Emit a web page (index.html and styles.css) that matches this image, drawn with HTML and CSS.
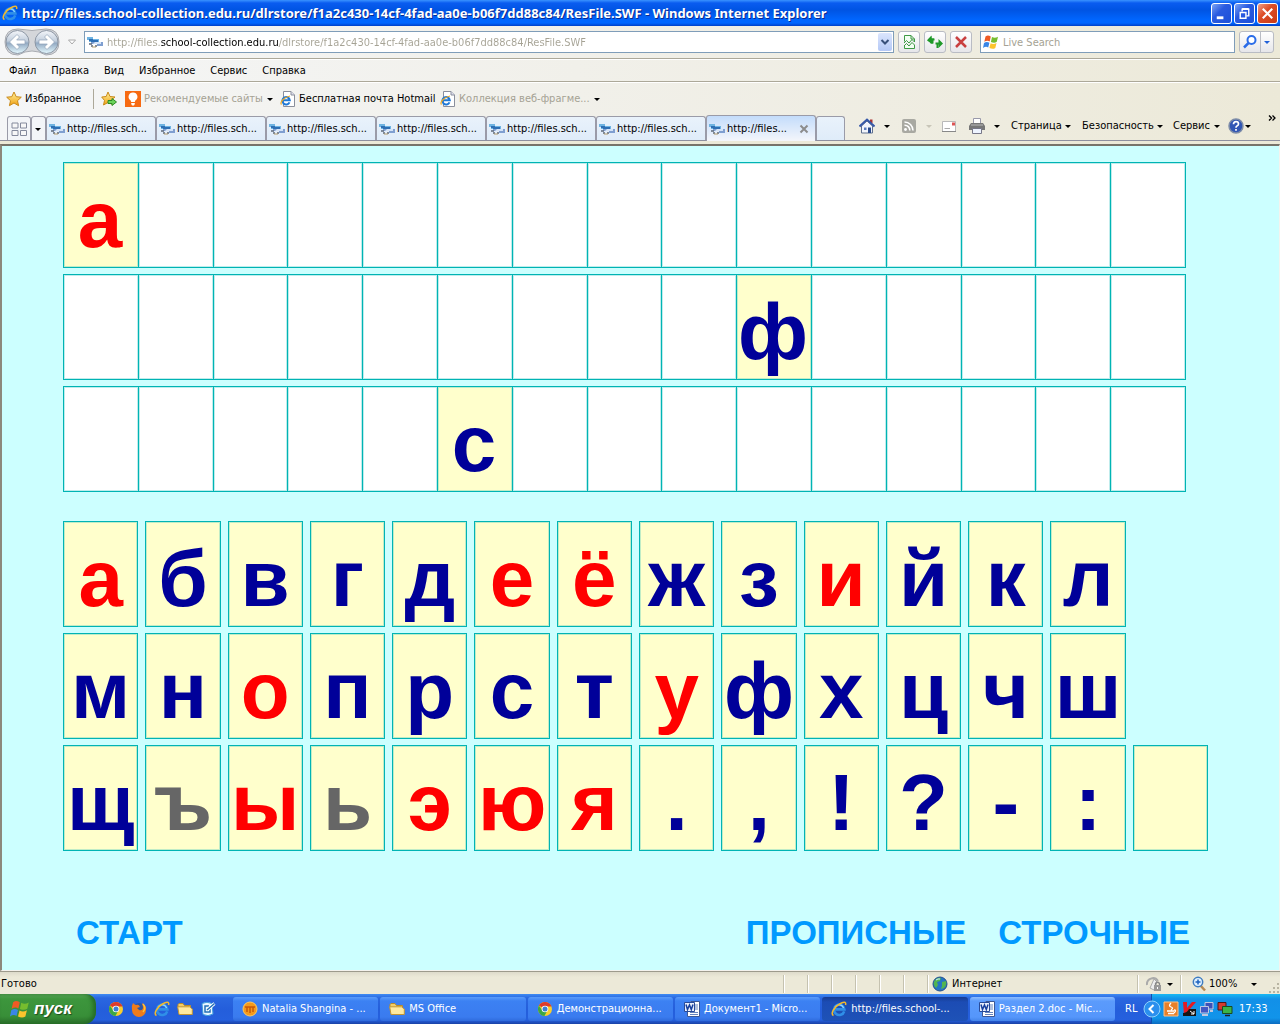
FILE: index.html
```html
<!DOCTYPE html>
<html lang="ru">
<head>
<meta charset="utf-8">
<meta name="viewport" content="width=device-width, initial-scale=1">
<title>ResFile.SWF - Windows Internet Explorer</title>
<link rel="stylesheet" href="styles.css">
</head>
<body>
<svg class="sprite" aria-hidden="true">
  <defs>
    <linearGradient id="gold" x1="0" y1="0" x2="0" y2="1"><stop offset="0" stop-color="#fff3a0"/><stop offset="1" stop-color="#f0a010"/></linearGradient>
    <linearGradient id="orb" x1="0" y1="0" x2="0" y2="1"><stop offset="0" stop-color="#f4f6fa"/><stop offset=".45" stop-color="#c3cfdd"/><stop offset=".55" stop-color="#92a9c2"/><stop offset="1" stop-color="#e6faff"/></linearGradient>
  </defs>
  <symbol id="ie" viewBox="0 0 16 16">
    <path d="M13.2 10.3A5.2 5.2 0 1 1 13.4 8.4H4.5" fill="none" stroke="#2f8fe8" stroke-width="2.6"/>
    <path d="M12.6 7A4.8 4.8 0 0 0 4 6" fill="none" stroke="#8fd4ff" stroke-width="1.2"/>
    <path d="M2.5 14.5C-1 13 3 6 8.500 3C12 .8 15.800 .3 14.500 4" fill="none" stroke="#f3b92c" stroke-width="1.500"/>
  </symbol>
  <symbol id="page-ie" viewBox="0 0 16 16">
    <path d="M3.500 .5H11L14.500 4V15.500H3.500Z" fill="#fff" stroke="#8a8f9c"/><path d="M11 .5V4H14.500" fill="#dde" stroke="#8a8f9c"/>
    <path d="M9.500 11.300A3.700 3.700 0 1 1 9.800 9.300H3.500" fill="none" stroke="#1d78d8" stroke-width="2"/>
    <path d="M1.500 13.500C-.5 12 3 6.500 10 5" fill="none" stroke="#f0a820" stroke-width="1.200"/>
  </symbol>
  <symbol id="cloud" viewBox="0 0 16 16">
    <path d="M0 3H6V5H12V8H2V6H0Z" fill="#6fb4e2"/><path d="M2 5H6V6H11V8H4V7H2Z" fill="#2f6fb4"/>
    <path d="M4 8H16V12H10V10H4Z" fill="#7f9fd0"/><path d="M8 8H14V10H6Z" fill="#d5e4f8"/>
    <path d="M2 10H5M4 12H6M8 12H10" stroke="#5d6a7a" stroke-width="1.500"/><path d="M5 13H9" stroke="#b39c6c"/>
  </symbol>
  <symbol id="star" viewBox="0 0 16 16"><path d="M8 1L10.200 5.700L15.300 6.200L11.500 9.700L12.600 14.700L8 12L3.400 14.700L4.500 9.700L.7 6.200L5.800 5.700Z" fill="url(#gold)" stroke="#c98a1b"/></symbol>
  <symbol id="star-add" viewBox="0 0 16 16"><path d="M7 1L9 5.500L14 6L10.500 9L11.500 13.500L7 11.500L2.500 14L3.500 9.500L.7 6L5.200 5.500Z" fill="url(#gold)" stroke="#c98a1b"/><path d="M7 9.500H11V7.500L15.500 11L11 14.500V12.500H7Z" fill="#6bd35a" stroke="#2d8a25"/></symbol>
  <symbol id="bulb" viewBox="0 0 16 16"><path d="M0 0H16V16H0Z" fill="#f76a12"/><path d="M8 1.500A4.300 4.300 0 0 1 10.300 9.500L9.800 11H6.200L5.700 9.500A4.300 4.300 0 0 1 8 1.500ZM6.200 12H9.800V13L9 14.500H7L6.200 13Z" fill="#fff"/></symbol>
  <symbol id="down" viewBox="0 0 8 8"><path d="M1 3H7L4 6Z" fill="currentColor"/></symbol>
  <symbol id="chevron" viewBox="0 0 10 10"><path d="M1.500 3L5 6.500L8.500 3" fill="none" stroke="#38507a" stroke-width="2"/></symbol>
  <symbol id="flag" viewBox="0 0 16 16">
    <path d="M2.500 2.500C4.500 1 6 1.500 7.800 2.500L6.700 7.500C5 6.500 3.500 6.500 1.300 7.700Z" fill="#ee5a24"/><path d="M9 3C11 4 12.800 4 15 2.700L13.800 7.800C12 9 10 8.800 7.900 7.900Z" fill="#76bd2e"/>
    <path d="M1 9C3 7.700 4.500 7.800 6.400 8.800L5.200 13.500C3.500 12.500 2 12.700 0 13.900Z" fill="#3a86e6"/><path d="M7.600 9.200C9.500 10.200 11.300 10.300 13.500 9L12.300 14C10.500 15.200 8.500 15 6.400 14Z" fill="#fcc42d"/>
  </symbol>
  <symbol id="word" viewBox="0 0 16 16"><path d="M6.500 .5H15.500V15.500H3.500V10" fill="#fff" stroke="#3c5795"/><path d="M11 4H14M11 6H14M11 8H14M6 11.500H14M6 13.500H14" stroke="#6684be"/><path d="M.5 1.500H10.500V10.500H.5Z" fill="#e9effb" stroke="#284b9a"/><path d="M2 3.500L3.500 8.500L5.500 4L7.300 8.500L9 3.500" fill="none" stroke="#173f9d" stroke-width="1.500"/></symbol>
  <symbol id="folder" viewBox="0 0 16 16"><path d="M1 3.500L2 2.500H6L7.500 4.500H13.500V7H1Z" fill="#f3cd67" stroke="#b98a2a"/><path d="M.7 5.800H12.500L15.300 8V13.500H2Z" fill="#ffe9a0" stroke="#c39634"/></symbol>
  <symbol id="chrome" viewBox="0 0 16 16"><circle cx="8" cy="8" r="7" fill="#f9cf2d"/><path d="M8 8L1.900 4.500A7 7 0 0 1 14.100 4.500L14.500 5.500H8Z" fill="#dc3b2c"/><path d="M1.900 4.500A7 7 0 0 0 7.500 15L10 10L8 8L5 9Z" fill="#3da746"/><circle cx="8" cy="8" r="3.300" fill="#fff"/><circle cx="8" cy="8" r="2.500" fill="#3b7fd4"/></symbol>
</svg>

<header class="titlebar">
  <svg class="icon"><use href="#ie"/></svg>
  <h1 class="title">http://files.school-collection.edu.ru/dlrstore/f1a2c430-14cf-4fad-aa0e-b06f7dd88c84/ResFile.SWF - Windows Internet Explorer</h1>
  <div class="window-buttons">
    <button class="win" aria-label="Свернуть"><svg viewBox="0 0 20 20"><path d="M5 14.500H12" stroke="#fff" stroke-width="3"/></svg></button>
    <button class="win" aria-label="Восстановить"><svg viewBox="0 0 20 20"><path d="M7.500 8V5.500H14.500V12.500H12M7.500 5H14.500" fill="none" stroke="#fff" stroke-width="1.500"/><path d="M5.500 9H11.500V15H5.500Z" fill="none" stroke="#fff" stroke-width="1.500"/></svg></button>
    <button class="win win-close" aria-label="Закрыть"><svg viewBox="0 0 20 20"><path d="M5 5L15 15M15 5L5 15" stroke="#fff" stroke-width="2.200"/></svg></button>
  </div>
</header>

<div class="chrome">
  <div class="navbar">
    <button class="plain travel" aria-label="Назад и вперёд"><svg viewBox="0 0 56 28"><path d="M14 1Q28 4 42 1Q55 1 55 14Q55 27 42 27Q28 19 14 27Q1 27 1 14Q1 1 14 1Z" fill="#d4d6da" stroke="#a9acb2"/><circle cx="13.500" cy="14" r="11.500" fill="url(#orb)" stroke="#8c96a4"/><circle cx="42.500" cy="14" r="11.500" fill="url(#orb)" stroke="#8c96a4"/><path d="M5.500 14L13 6.500L15.500 9L12.700 12H21V16H12.700L15.500 19L13 21.500ZM50.500 14L43 6.500L40.500 9L43.300 12H35V16H43.300L40.500 19L43 21.500Z" fill="#fff" stroke="#8fa2b8" stroke-width=".7"/></svg></button>
    <button class="plain history" aria-label="Последние страницы"><svg viewBox="0 0 10 10"><path d="M1.500 3H8.500L5 7Z" fill="#fff" stroke="#aaa"/></svg></button>
    <div class="address">
      <svg class="icon"><use href="#cloud"/></svg>
      <input class="url" type="text" aria-label="Адрес" value="http://files.school-collection.edu.ru/dlrstore/f1a2c430-14cf-4fad-aa0e-b06f7dd88c84/ResFile.SWF">
      <button class="plain drop" aria-label="Показать список"><svg><use href="#chevron"/></svg></button>
    </div>
    <button class="tool" aria-label="Режим совместимости"><svg viewBox="0 0 16 16"><path d="M3.500 7.500V1.500H10L13.500 5V8L11 5.500L8 9L5.500 6.500L3 9M10 1.500V5H13.500" fill="#f2fff2" stroke="#3f9a45"/><path d="M3 12L5.500 9.500L8 12L11 8.500L13.500 11V14.500H3.500V11" fill="#f2fff2" stroke="#3f9a45"/></svg></button>
    <button class="tool" aria-label="Обновить"><svg viewBox="0 0 16 16"><path d="M0 6.500L4.500 2V4.500H7V6H6V9.500H3.500V8H4.500V9.500Z" fill="#1f9929"/><path d="M5.500 5V9.500M10.500 14V9" fill="none" stroke="#1f9929" stroke-width="2"/><path d="M4.500 1.500V10L.5 5.800ZM11.500 5V14L16 9.500Z" fill="#1f9929"/><path d="M4 5.500H7.500M12 9.500H8.500" stroke="#1f9929" stroke-width="2"/></svg></button>
    <button class="tool" aria-label="Остановить"><svg viewBox="0 0 16 16"><path d="M3 3L13 13M13 3L3 13" stroke="#c94040" stroke-width="2.500"/></svg></button>
    <div class="search">
      <svg class="icon"><use href="#flag"/></svg>
      <input class="query" type="text" aria-label="Поиск" placeholder="Live Search">
    </div>
    <div class="find">
      <button class="plain" aria-label="Найти"><svg viewBox="0 0 16 16"><circle cx="9.500" cy="6" r="4" fill="#fff" stroke="#2a6ce8" stroke-width="2"/><path d="M6.500 9L2 13.500" stroke="#2a6ce8" stroke-width="2.500"/></svg></button>
      <button class="plain find-more" aria-label="Параметры поиска"><svg class="arrow"><use href="#down"/></svg></button>
    </div>
  </div>

  <nav class="menubar">
    <button class="plain">Файл</button><button class="plain">Правка</button><button class="plain">Вид</button><button class="plain">Избранное</button><button class="plain">Сервис</button><button class="plain">Справка</button>
  </nav>

  <div class="favbar">
    <button class="plain fav-main"><svg class="icon"><use href="#star"/></svg>Избранное</button>
    <button class="plain fav-add" aria-label="Добавить на панель избранного"><svg class="icon"><use href="#star-add"/></svg></button>
    <button class="plain fav-sites muted"><svg class="icon"><use href="#bulb"/></svg>Рекомендуемые сайты<svg class="arrow dark"><use href="#down"/></svg></button>
    <a class="fav-mail" href="#hotmail"><svg class="icon"><use href="#page-ie"/></svg>Бесплатная почта Hotmail</a>
    <button class="plain muted"><svg class="icon"><use href="#page-ie"/></svg>Коллекция веб-фрагме...<svg class="arrow dark"><use href="#down"/></svg></button>
  </div>

  <div class="tabrow">
    <button class="tab quick" aria-label="Быстрые вкладки"><svg viewBox="0 0 16 16"><path d="M1 2H7V7H1ZM9.500 2H15.500V7H9.500ZM1 9.500H7V14.500H1ZM9.500 9.500H15.500V14.500H9.500Z" fill="#f7f7f7" stroke="#848a9c"/></svg></button>
    <button class="tab quick-list" aria-label="Список вкладок"><svg class="arrow"><use href="#down"/></svg></button>
    <button class="tab"><svg class="icon"><use href="#cloud"/></svg>http://files.sch...</button>
    <button class="tab"><svg class="icon"><use href="#cloud"/></svg>http://files.sch...</button>
    <button class="tab"><svg class="icon"><use href="#cloud"/></svg>http://files.sch...</button>
    <button class="tab"><svg class="icon"><use href="#cloud"/></svg>http://files.sch...</button>
    <button class="tab"><svg class="icon"><use href="#cloud"/></svg>http://files.sch...</button>
    <button class="tab"><svg class="icon"><use href="#cloud"/></svg>http://files.sch...</button>
    <button class="tab active"><svg class="icon"><use href="#cloud"/></svg>http://files...<svg class="close" viewBox="0 0 10 10"><path d="M1.500 1.500L8.500 8.500M8.500 1.500L1.500 8.500" stroke="#8c8c8c" stroke-width="2"/></svg></button>
    <button class="tab new" aria-label="Новая вкладка"></button>
    <div class="commands">
      <button class="plain cmd-wide" aria-label="Домой"><svg class="icon" viewBox="0 0 16 16"><path d="M11 1.500H13.500V5H11Z" fill="#a33"/><path d="M2.500 8L8 3L13.500 8V15H2.500Z" fill="#f2f5fc" stroke="#60708e"/><path d="M.5 8.500L8 1.500L15.500 8.500" fill="none" stroke="#3658a8" stroke-width="2"/><path d="M5 9.500H7.500V12H5Z" fill="#5a7cc0"/><path d="M9 9.500H12V15H9Z" fill="#294a8c"/></svg><svg class="arrow"><use href="#down"/></svg></button>
      <button class="plain cmd" aria-label="Каналы"><svg class="icon" viewBox="0 0 16 16"><rect x="1" y="1" width="14" height="14" rx="2" fill="#a9a9a2"/><circle cx="4.500" cy="11.500" r="1.400" fill="#fff"/><path d="M3.500 7.200A5 5 0 0 1 8.800 12.500M3.500 4A8.500 8.500 0 0 1 12 12.500" fill="none" stroke="#fff" stroke-width="1.600"/></svg><svg class="arrow pale"><use href="#down"/></svg></button>
      <button class="plain cmd-icon" aria-label="Почта"><svg class="icon" viewBox="0 0 16 16"><path d="M1.500 3.500H14.500V13.500H1.500Z" fill="#fff" stroke="#b9b9b9"/><path d="M1 13.500H15" stroke="#888"/><path d="M3.500 10.500H9" stroke="#aaa"/><path d="M11 4.500H14V7.500H11Z" fill="#d55"/></svg></button>
      <button class="plain cmd-wide" aria-label="Печать"><svg class="icon" viewBox="0 0 16 16"><path d="M4.500 .5H11.500V6H4.500Z" fill="#fff" stroke="#99a"/><path d="M2 5H14L16 8V12H0V8Z" fill="#777"/><path d="M2 7H14" stroke="#bbb"/><path d="M3.500 10.500H12.500V15.500H3.500Z" fill="#eef4ff" stroke="#778"/></svg><svg class="arrow"><use href="#down"/></svg></button>
      <button class="plain cmd-page">Страница<svg class="arrow"><use href="#down"/></svg></button>
      <button class="plain cmd-safe">Безопасность<svg class="arrow"><use href="#down"/></svg></button>
      <button class="plain cmd-tools">Сервис<svg class="arrow"><use href="#down"/></svg></button>
      <button class="plain cmd-help" aria-label="Справка"><svg class="icon" viewBox="0 0 16 16"><circle cx="8" cy="8" r="7" fill="#3156b4" stroke="#7e8da8" stroke-width="1.500"/><path d="M5.500 6.200Q5.500 3.700 8 3.700T10.500 6Q10.500 7.300 9 8Q8 8.500 8 9.700M8 11V12.700" fill="none" stroke="#fff" stroke-width="1.700"/></svg><svg class="arrow"><use href="#down"/></svg></button>
      <button class="plain cmd-more" aria-label="Ещё"><svg viewBox="0 0 8 8"><path d="M1 1.500L3.500 4L1 6.500M4.500 1.500L7 4L4.500 6.500" fill="none" stroke="#000" stroke-width="1.300"/></svg></button>
    </div>
  </div>
</div>

<main class="stage">
  <div class="board">
    <div class="cell filled vowel">а</div><div class="cell"></div><div class="cell"></div><div class="cell"></div><div class="cell"></div><div class="cell"></div><div class="cell"></div><div class="cell"></div><div class="cell"></div><div class="cell"></div><div class="cell"></div><div class="cell"></div><div class="cell"></div><div class="cell"></div><div class="cell"></div>
    <div class="cell"></div><div class="cell"></div><div class="cell"></div><div class="cell"></div><div class="cell"></div><div class="cell"></div><div class="cell"></div><div class="cell"></div><div class="cell"></div><div class="cell filled">ф</div><div class="cell"></div><div class="cell"></div><div class="cell"></div><div class="cell"></div><div class="cell"></div>
    <div class="cell"></div><div class="cell"></div><div class="cell"></div><div class="cell"></div><div class="cell"></div><div class="cell filled">с</div><div class="cell"></div><div class="cell"></div><div class="cell"></div><div class="cell"></div><div class="cell"></div><div class="cell"></div><div class="cell"></div><div class="cell"></div><div class="cell"></div>
  </div>

  <div class="cards">
    <button class="card vowel first">а</button><button class="card">б</button><button class="card">в</button><button class="card">г</button><button class="card">д</button><button class="card vowel">е</button><button class="card vowel">ё</button><button class="card">ж</button><button class="card">з</button><button class="card vowel">и</button><button class="card">й</button><button class="card">к</button><button class="card">л</button>
    <button class="card first">м</button><button class="card">н</button><button class="card vowel">о</button><button class="card">п</button><button class="card">р</button><button class="card">с</button><button class="card">т</button><button class="card vowel">у</button><button class="card">ф</button><button class="card">х</button><button class="card">ц</button><button class="card">ч</button><button class="card">ш</button>
    <button class="card first">щ</button><button class="card sign">ъ</button><button class="card vowel">ы</button><button class="card sign">ь</button><button class="card vowel">э</button><button class="card vowel">ю</button><button class="card vowel">я</button><button class="card">.</button><button class="card">,</button><button class="card">!</button><button class="card">?</button><button class="card">-</button><button class="card">:</button><button class="card" aria-label="Пробел"></button>
  </div>

  <div class="actions">
    <button class="action start-over">СТАРТ</button>
    <button class="action">ПРОПИСНЫЕ</button>
    <button class="action">СТРОЧНЫЕ</button>
  </div>
</main>

<footer class="statusbar">
  <span class="state">Готово</span>
  <span class="pane"></span><span class="pane"></span><span class="pane"></span><span class="pane"></span><span class="pane"></span><span class="pane"></span>
  <span class="pane zone"><svg class="icon" viewBox="0 0 16 16"><circle cx="8" cy="8" r="7" fill="#2474c4" stroke="#24508c"/><path d="M3 4Q6 1 9 2L8 5L5 6L6 9L4 12Q1 9 2 6ZM10 6L14 5Q15 9 12 12L9 13L10 10Z" fill="#52b450"/><path d="M4 4Q6 2.500 8 3" stroke="#cdf1ff" fill="none"/></svg>Интернет</span>
  <button class="plain pane shield" aria-label="Защищённый режим"><svg class="icon" viewBox="0 0 16 16"><path d="M1 9A6 6 0 0 1 12 5" fill="none" stroke="#aaa" stroke-width="2"/><path d="M4 12L8 3L11 6L8 14Z" fill="#eee" stroke="#aaa"/><path d="M8 9H15V15H8Z" fill="#999"/><path d="M9.500 9V7.500Q11.500 5 13.500 7.500V9" fill="none" stroke="#888" stroke-width="1.300"/><path d="M11.500 11V13" stroke="#fff"/></svg><svg class="arrow"><use href="#down"/></svg></button>
  <button class="plain pane zoom"><svg class="icon" viewBox="0 0 16 16"><path d="M9 9L14 14.500" stroke="#b88a52" stroke-width="2.500"/><circle cx="7" cy="6" r="4.700" fill="#dff0ff" stroke="#3f7cc0" stroke-width="1.500"/><path d="M4.500 6H9.500M7 3.500V8.500" stroke="#1d61c0" stroke-width="1.500"/></svg>100%<svg class="arrow"><use href="#down"/></svg></button>
  <svg class="grip" viewBox="0 0 12 12"><path d="M9 1H11V3H9ZM5 5H7V7H5ZM9 5H11V7H9ZM1 9H3V11H1ZM5 9H7V11H5ZM9 9H11V11H9Z" fill="#b8b4a2"/></svg>
</footer>

<nav class="taskbar">
  <button class="start"><svg viewBox="0 0 16 16"><use href="#flag"/></svg>пуск</button>
  <div class="quicklaunch">
    <button class="plain" aria-label="Chrome"><svg class="icon"><use href="#chrome"/></svg></button>
    <button class="plain" aria-label="Firefox"><svg class="icon" viewBox="0 0 16 16"><circle cx="8" cy="7.500" r="5.500" fill="#2b57a8"/><path d="M2 2Q4 4 5 4Q8 3 9 6L6 7L8 9Q12 10 12 6L11 2Q16 5 15 9A7 7 0 0 1 1 9Q0 5 2 2Z" fill="#ef7c1c"/><path d="M12 3Q15.500 7 12 11" fill="none" stroke="#fbc33b" stroke-width="1.500"/></svg></button>
    <button class="plain" aria-label="Internet Explorer"><svg class="icon"><use href="#ie"/></svg></button>
    <button class="plain" aria-label="Проводник"><svg class="icon"><use href="#folder"/></svg></button>
    <button class="plain" aria-label="Рабочий стол"><svg class="icon" viewBox="0 0 16 16"><path d="M2 2.500Q7 0 12 2.500L13 13Q8 16 3 13.500Z" fill="#eaf6ff" stroke="#3f9ddd"/><path d="M9 5H5V11H10V8" fill="none" stroke="#2472b8" stroke-width="1.500"/><path d="M7 9L14.500 2.500" stroke="#fff" stroke-width="3"/><path d="M7 9L14.500 2.500" stroke="#2472b8" stroke-width="1.500"/></svg></button>
  </div>
  <div class="tasks">
    <button class="task"><svg class="icon" viewBox="0 0 16 16"><circle cx="8" cy="8" r="7" fill="#f59a1b" stroke="#ffc75c"/><path d="M3 6H13M5 6V11M8 6V12M11 6V11" fill="none" stroke="#c95708" stroke-width="1.500"/></svg>Natalia Shangina - ...</button>
    <button class="task"><svg class="icon"><use href="#folder"/></svg>MS Office</button>
    <button class="task"><svg class="icon"><use href="#chrome"/></svg>Демонстрационна...</button>
    <button class="task"><svg class="icon"><use href="#word"/></svg>Документ1 - Micro...</button>
    <button class="task current"><svg class="icon"><use href="#ie"/></svg>http://files.school-...</button>
    <button class="task flash"><svg class="icon"><use href="#word"/></svg>Раздел 2.doc - Mic...</button>
  </div>
  <span class="lang">RL</span>
  <div class="tray">
    <button class="plain hide" aria-label="Скрыть значки"><svg viewBox="0 0 18 18"><circle cx="9" cy="9" r="8" fill="#2b8fee" stroke="#8fd0fb"/><path d="M10.500 5L6.500 9L10.500 13" fill="none" stroke="#fff" stroke-width="2"/></svg></button>
    <svg class="icon" viewBox="0 0 16 16"><path d="M1 1H15V15H1Z" fill="#e8802a" stroke="#ffc183"/><path d="M8 2Q5 5 8 6T8 9M4 10H11M5 12.500H11M11 9Q14 9 11 12" fill="none" stroke="#fff" stroke-width="1.300"/></svg>
    <svg class="icon" viewBox="0 0 16 16"><path d="M2 1H6V7L11 1H15L9 8L14 14H3Z" fill="#e31b23"/><path d="M8 8H15V15H2V12Q6 12 8 8Z" fill="#161616"/><path d="M9 10L13 13M13 10V13H10" stroke="#fff" fill="none"/></svg>
    <svg class="icon" viewBox="0 0 16 16"><path d="M6 1.500H14V8H6Z" fill="#3c50b8" stroke="#c0c8e0"/><path d="M1.500 5.500H9.500V12H1.500Z" fill="#4258c4" stroke="#c0c8e0"/><path d="M3 14H9M11 10H14" stroke="#c0c8e0" stroke-width="2"/></svg>
    <svg class="icon" viewBox="0 0 16 16"><path d="M1 1.500H9V9H1Z" fill="#d43b2f" stroke="#501515"/><path d="M5.500 5.500H15V12.500H5.500Z" fill="#3bb447" stroke="#1b4b20"/><path d="M8 14.500H13" stroke="#222" stroke-width="1.500"/></svg>
    <time class="clock">17:33</time>
  </div>
</nav>
</body>
</html>
```

FILE: styles.css
```css
* { box-sizing: border-box; }

html, body { margin: 0; }

body {
  min-height: 100vh;
  display: flex;
  flex-direction: column;
  background: #ece9d8;
  color: #000;
  font: 11px/14px "DejaVu Sans Condensed", "DejaVu Sans", sans-serif;
  overflow-x: hidden;
}

button, input { font: inherit; color: inherit; }
button { margin: 0; cursor: pointer; white-space: nowrap; }
svg { display: block; flex: none; }
a { color: inherit; text-decoration: none; }

.sprite { position: absolute; width: 0; height: 0; }
.icon { width: 16px; height: 16px; }
.arrow { width: 8px; height: 8px; }
.dark { color: #000; }
.pale { color: #c8c5b8; }
.muted { color: #a5a294; }

.plain {
  display: flex;
  align-items: center;
  padding: 0;
  border: 0;
  background: none;
}

/* Title bar */
.titlebar {
  display: flex;
  align-items: center;
  gap: 4px;
  height: 26px;
  padding: 0 2px;
  background: linear-gradient(#3a93ff 0, #0a5cf0 3px, #0054e3 10px, #0066ff 20px, #0066ff 23px, #0040c8 26px);
}
.title {
  flex: 1;
  margin: 0;
  overflow: hidden;
  color: #fff;
  font-family: "Noto Sans", sans-serif;
  font-size: 13px;
  font-weight: bold;
  line-height: 18px;
  white-space: nowrap;
  text-shadow: 1px 1px 0 #0a2a90;
}
.window-buttons { display: flex; gap: 2px; }
.win {
  width: 21px;
  height: 21px;
  padding: 0;
  border: 1px solid #fff;
  border-radius: 3px;
  background: linear-gradient(135deg, #7da5f5, #2a5be0 40%, #1c4fd8);
}
.win-close { background: linear-gradient(135deg, #f0a088, #dd4e28 40%, #c83a14); }

/* Browser toolbars */
.chrome { background: linear-gradient(90deg, #f5f6f7, #f1f0ea 45%, #ece9d8); }

.navbar {
  display: flex;
  align-items: center;
  height: 33px;
  padding: 0 6px 1px 4px;
  border-bottom: 1px solid #aca899;
}
.travel svg { width: 56px; height: 28px; }
.history { width: 24px; justify-content: center; }
.history svg { width: 10px; height: 10px; }
.address, .search {
  display: flex;
  align-items: center;
  height: 22px;
  border: 1px solid #7f9db9;
  background: #fff;
}
.address { flex: 1; margin-right: 4px; padding: 0 1px 0 2px; gap: 4px; }
.search { width: 255px; margin: 0 4px; padding: 0 2px; gap: 4px; }
.url, .query {
  flex: 1;
  min-width: 0;
  padding: 2px 0 0;
  border: 0;
  outline: 0;
  background: none;
}
.url {
  background: linear-gradient(90deg, #a5a294 54px, #000 54px, #000 172px, #a5a294 172px);
  background-clip: text;
  -webkit-background-clip: text;
  -webkit-text-fill-color: transparent;
}
.query::placeholder { color: #a5a294; opacity: 1; }
.drop {
  width: 14px;
  height: 18px;
  justify-content: center;
  border-radius: 2px;
  background: linear-gradient(#dbe5fd, #b4c8f6);
}
.drop svg { width: 10px; height: 10px; }
.tool {
  display: flex;
  align-items: center;
  justify-content: center;
  width: 22px;
  height: 22px;
  margin-right: 4px;
  padding: 0;
  border: 1px solid #b9bcc4;
  border-radius: 3px;
  background: linear-gradient(#fff, #e6e6ea);
}
.tool svg { width: 16px; height: 16px; }
.find {
  display: flex;
  height: 22px;
  border: 1px solid #b9bcc4;
  border-radius: 3px;
  background: linear-gradient(#fff, #e6e6ea);
}
.find .plain { width: 20px; justify-content: center; color: #2060d8; }
.find .plain:first-child svg { width: 16px; height: 16px; }
.find .find-more { width: 13px; border-left: 1px solid #b9bcc4; }

.menubar {
  display: flex;
  align-items: center;
  gap: 15px;
  height: 23px;
  padding: 0 9px;
  border-top: 1px solid #fff;
  border-bottom: 1px solid #aca899;
}

.favbar {
  display: flex;
  align-items: center;
  height: 33px;
  padding-left: 6px;
  border-top: 1px solid #fff;
}
.favbar .plain, .fav-mail { display: flex; align-items: center; gap: 3px; }
.favbar .fav-main { width: 88px; height: 20px; border-right: 1px solid #aca899; }
.favbar .fav-add { width: 31px; padding-left: 7px; }
.favbar .fav-sites { width: 155px; }
.fav-mail { width: 160px; white-space: nowrap; }

/* Tabs and command bar */
.tabrow {
  display: flex;
  align-items: flex-end;
  height: 26px;
  padding-left: 7px;
  border-bottom: 1px solid #8e8f9f;
}
.tab {
  display: flex;
  flex: 0 0 110px;
  align-items: center;
  gap: 2px;
  height: 24px;
  padding: 0 2px;
  border: 1px solid #9a9ba8;
  border-bottom: 0;
  border-radius: 3px 3px 0 0;
  background: linear-gradient(#e9f2fb, #dfecf9);
}
.quick { flex-basis: 24px; padding: 0 3px; background: #f3f5f8; }
.quick svg { width: 16px; height: 16px; }
.quick-list { flex-basis: 15px; background: #f3f5f8; }
.active {
  height: 26px;
  margin-bottom: -1px;
  background: linear-gradient(#c3dcfb, #f4f6fb);
}
.close { width: 10px; height: 10px; margin: 0 4px 0 auto; }
.new { flex-basis: 29px; }
.commands {
  display: flex;
  flex: 1;
  align-items: center;
  justify-content: flex-end;
  height: 26px;
  padding: 0 4px 2px 0;
}
.cmd-wide { width: 42px; gap: 8px; }
.cmd { width: 40px; gap: 8px; }
.cmd-icon { width: 28px; }
.cmd-page, .cmd-safe, .cmd-tools { gap: 2px; justify-content: space-between; }
.cmd-page { width: 60px; margin-right: 11px; }
.cmd-safe { width: 80px; margin-right: 11px; }
.cmd-tools { width: 48px; margin-right: 7px; }
.cmd-help { width: 40px; }
.cmd-more { align-self: flex-start; }
.cmd-more svg { width: 8px; height: 8px; }

/* Letter board */
.stage {
  flex: 1;
  margin-top: 3px;
  padding: 16px 71px 16px 61px;
  border: 1px solid #f4f3ee;
  border-top: 2px solid #77736a;
  border-left: 2px solid #8c887c;
  background: #ccffff;
  font-family: "Liberation Sans", Arial, sans-serif;
}
.board, .cards { display: grid; }
.board {
  grid-template-columns: repeat(15, 1fr);
  grid-auto-rows: 106px;
  row-gap: 6px;
  margin-right: 22px;
  padding-right: 1px;
}
.cell, .card {
  border: 1px solid #00b4b4;
  box-shadow: inset 0 0 0 1px rgba(0, 180, 180, .25);
  color: #000099;
  font-size: 80px;
  font-weight: bold;
  line-height: 92px;
  text-align: center;
}
.cell {
  margin-right: -1px;
  padding: 11px 2px 0 0;
  background-color: #fff;
}
.card {
  display: flex;
  justify-content: center;
  padding: 11px 0 0;
  background-color: #ffffcc;
}
.cards {
  grid-template-columns: repeat(14, 1fr);
  grid-auto-rows: 106px;
  gap: 6px 7px;
  margin-top: 29px;
}
.cell.filled { background-color: #ffffcc; }
.first { grid-column: 1; }
.vowel { color: #ff0000; }
.sign { color: #666666; }

.actions {
  display: flex;
  gap: 32px;
  margin-top: 62px;
  padding: 0 18px 0 13px;
}
.action {
  padding: 0;
  border: 0;
  background: none;
  color: #0099ff;
  font-size: 33px;
  font-weight: bold;
  line-height: 40px;
}
.start-over { margin-right: auto; }

/* Status bar */
.statusbar {
  display: flex;
  align-items: center;
  height: 23px;
  padding-top: 2px;
  border-top: 1px solid #9d9a8c;
  background: linear-gradient(#dedbcb, #ece9d8 5px);
}
.state { flex: 1; padding-left: 1px; }
.pane {
  display: flex;
  align-items: center;
  gap: 4px;
  flex: 0 0 24px;
  height: 18px;
  border-left: 1px solid #c5c2b0;
  box-shadow: inset 1px 0 0 #fff;
}
.zone { flex-basis: 210px; padding-left: 4px; }
.shield { flex-basis: 43px; padding-left: 8px; }
.zoom { flex-basis: 78px; padding-left: 10px; gap: 2px; }
.zoom .arrow { margin-left: auto; }
.grip { width: 12px; height: 12px; align-self: flex-end; margin-left: 10px; }

/* Taskbar */
.taskbar {
  display: flex;
  align-items: stretch;
  height: 30px;
  background: linear-gradient(#3f8cf3 0, #2a67e0 4px, #245edb 15px, #2560de 26px, #1941a5 30px);
  color: #fff;
}
.start {
  display: flex;
  align-items: center;
  gap: 4px;
  width: 96px;
  padding: 0 0 0 10px;
  border: 0;
  border-radius: 0 10px 12px 0;
  background: linear-gradient(#5cac5c 0, #3d963d 5px, #388f38 22px, #2a6e2a 30px);
  box-shadow: inset -3px 0 4px #256b25;
  color: #fff;
  font: italic bold 17px/22px "Liberation Sans", Arial, sans-serif;
  text-shadow: 1px 1px 1px #1d4a1d;
}
.start svg { width: 20px; height: 20px; }
.quicklaunch { display: flex; align-items: center; gap: 7px; width: 137px; padding-left: 12px; }
.tasks { display: flex; flex: 1; gap: 2px; padding: 3px 0 3px; }
.task {
  display: flex;
  flex: 1 1 0;
  min-width: 0;
  align-items: center;
  gap: 4px;
  padding: 0 9px;
  border: 0;
  border-radius: 3px;
  background: linear-gradient(#5a9bfa, #3c81f3 4px, #3a7bef 20px, #2f6bdc);
  overflow: hidden;
  color: #fff;
}
.current { background: linear-gradient(#173c92, #1c4cb4 5px, #1e52b7); }
.flash { background: linear-gradient(#8dbdff, #5b9bfc 4px, #5596fb 20px, #4384ea); }
.lang { align-self: center; width: 36px; padding-left: 10px; }
.tray {
  display: flex;
  align-items: center;
  gap: 2px;
  width: 129px;
  border-left: 1px solid #0f4fae;
  background: linear-gradient(#19b9f3 0, #1290e8 5px, #1194ea 24px, #0c6cc0 30px);
}
.hide { margin-left: -9px; }
.hide svg { width: 18px; height: 18px; }
.clock { padding-left: 4px; }
```
